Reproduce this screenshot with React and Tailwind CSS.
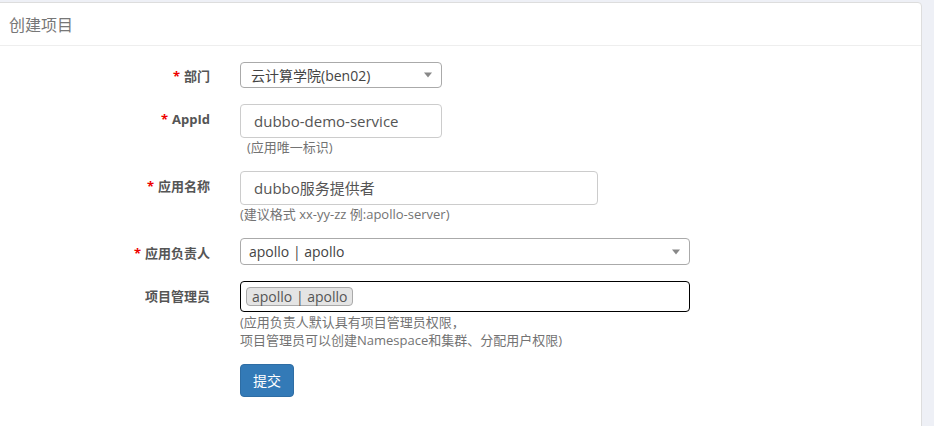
const font = { fontFamily: '"Open Sans", "Noto Sans CJK SC", sans-serif' };

const Caret = () => (
  <span className="absolute right-[9px] top-1/2 -translate-y-1/2 w-0 h-0 border-l-[4px] border-r-[4px] border-t-[5px] border-l-transparent border-r-transparent border-t-[#888]"></span>
);

const Row = ({ label, required, children, labelPad = "pt-0", mb = "mb-[16px]" }) => (
  <div className={`flex items-start ${mb}`}>
    <div className={`w-[210px] shrink-0 text-right text-[13px] font-bold text-[#555] ${labelPad}`}>
      {required && <span className="text-[#e00] mr-1">*</span>}
      {label}
    </div>
    <div className="ml-[30px]">{children}</div>
  </div>
);

const App = () => {
  return (
    <div
      className="w-full h-screen overflow-hidden bg-[#eef0f6] pt-[2px]"
      style={font}
    >
      <div className="ml-[-1px] w-[923px] h-[500px] bg-white border border-[#ddd] rounded-tr-[4px]">
        <div className="h-[43px] px-[9px] flex items-center border-b border-[#eee]">
          <h3 className="text-[16px] text-[#777] leading-none mt-[2px]">创建项目</h3>
        </div>

        <form className="pt-[16px]">
          <Row label="部门" required labelPad="pt-[5px]">
            <div className="relative w-[202px] h-[26px] border border-[#aaa] rounded-[4px] flex items-center pl-[10px] text-[14px] text-[#444]">
              云计算学院(ben02)
              <Caret />
            </div>
          </Row>

          <Row label="AppId" required labelPad="pt-[6px]">
            <div className="w-[202px] h-[34px] border border-[#ccc] rounded-[4px] flex items-center pl-[13px] text-[15px] text-[#555]">
              dubbo-demo-service
            </div>
            <div className="text-[13px] text-[#737373] leading-[16px] mt-[1px] pl-[7px]">
              (应用唯一标识)
            </div>
          </Row>

          <Row label="应用名称" required labelPad="pt-[6px]">
            <div className="w-[358px] h-[34px] border border-[#ccc] rounded-[4px] flex items-center pl-[13px] text-[15px] text-[#555]">
              dubbo服务提供者
            </div>
            <div className="text-[13px] text-[#737373] leading-[16px] mt-[1px]">
              (建议格式 xx-yy-zz 例:apollo-server)
            </div>
          </Row>

          <Row label="应用负责人" required labelPad="pt-[6px]">
            <div className="relative w-[450px] h-[27px] border border-[#aaa] rounded-[4px] flex items-center pl-[8px] text-[14px] text-[#444]">
              apollo | apollo
              <Caret />
            </div>
          </Row>

          <Row label="项目管理员" labelPad="pt-[6px]" mb="mb-[15px]">
            <div className="w-[450px] h-[31px] border border-black rounded-[4px] flex items-center pl-[5px]">
              <span className="h-[19px] px-[5px] flex items-center bg-[#e4e4e4] border border-[#aaa] rounded-[4px] text-[14px] text-[#555]">
                apollo | apollo
              </span>
            </div>
            <div className="text-[13px] text-[#737373] leading-[18px] mt-[1px]">
              (应用负责人默认具有项目管理员权限，
              <br />
              项目管理员可以创建Namespace和集群、分配用户权限)
            </div>
          </Row>

          <div className="ml-[240px]">
            <button
              type="button"
              className="h-[33px] px-[12px] bg-[#337ab7] border border-[#2e6da4] rounded-[4px] text-white text-[14px]"
            >
              提交
            </button>
          </div>
        </form>
      </div>
    </div>
  );
};

export default App;
